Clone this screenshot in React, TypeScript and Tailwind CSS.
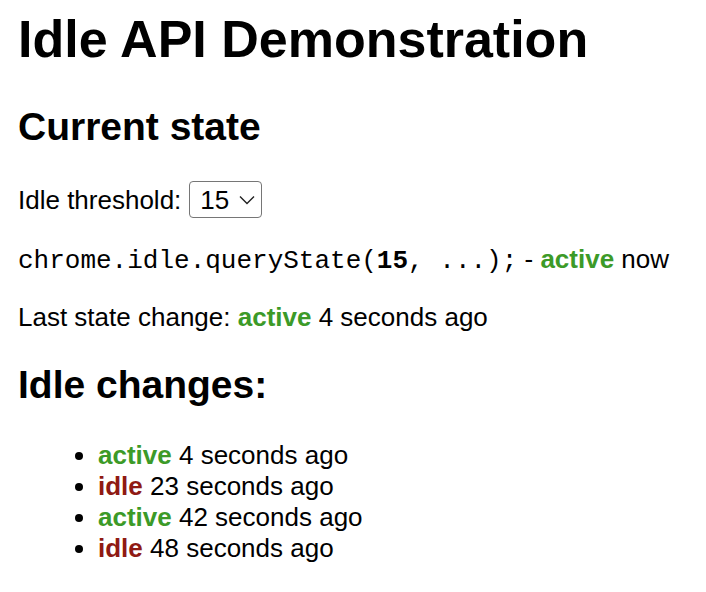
const CHANGES = [
  { state: 'active', ago: '4 seconds ago' },
  { state: 'idle', ago: '23 seconds ago' },
  { state: 'active', ago: '42 seconds ago' },
  { state: 'idle', ago: '48 seconds ago' },
]

function StateWord({ state }: { state: string }) {
  return (
    <b className={state === 'active' ? 'font-bold text-[#3c9a28]' : 'font-bold text-[#8f1a13]'}>{state}</b>
  )
}

export default function App() {
  return (
    <div className="min-h-[592px] bg-white px-[18px] pt-[9px] text-black font-['Liberation_Sans',Arial,sans-serif]">
      <h1 className="text-[52px] leading-[60px] font-bold">Idle API Demonstration</h1>

      <h2 className="mt-[35px] text-[39px] leading-[45px] font-bold">Current state</h2>

      {/* threshold picker */}
      <div className="mt-[32px] flex items-center text-[26px] leading-[30px]">
        <span>Idle threshold:</span>
        <div className="ml-[8px] flex h-[37px] w-[73px] items-center rounded-[4px] border border-[#767676] pl-[10px]">
          <span>15</span>
          <svg className="ml-[10px]" width="16" height="10" viewBox="0 0 16 10" fill="none">
            <polyline points="1,1.5 8,8.5 15,1.5" stroke="#222" strokeWidth="1.4" />
          </svg>
        </div>
      </div>

      <p className="mt-[26px] text-[26px] leading-[30px] whitespace-pre">
        <span className="font-['Liberation_Mono','Courier_New',monospace]">
          chrome.idle.queryState(<b className="font-bold">15</b>, ...);
        </span>
        {' - '}
        <StateWord state="active" /> now
      </p>

      <p className="mt-[26px] text-[26px] leading-[30px]">
        Last state change: <StateWord state="active" /> 4 seconds ago
      </p>

      <h2 className="mt-[30px] text-[39px] leading-[45px] font-bold">Idle changes:</h2>

      <ul className="mt-[33px] list-disc pl-[80px] text-[26px] leading-[31px]">
        {CHANGES.map((c, i) => (
          <li key={i}>
            <StateWord state={c.state} /> {c.ago}
          </li>
        ))}
      </ul>
    </div>
  )
}
